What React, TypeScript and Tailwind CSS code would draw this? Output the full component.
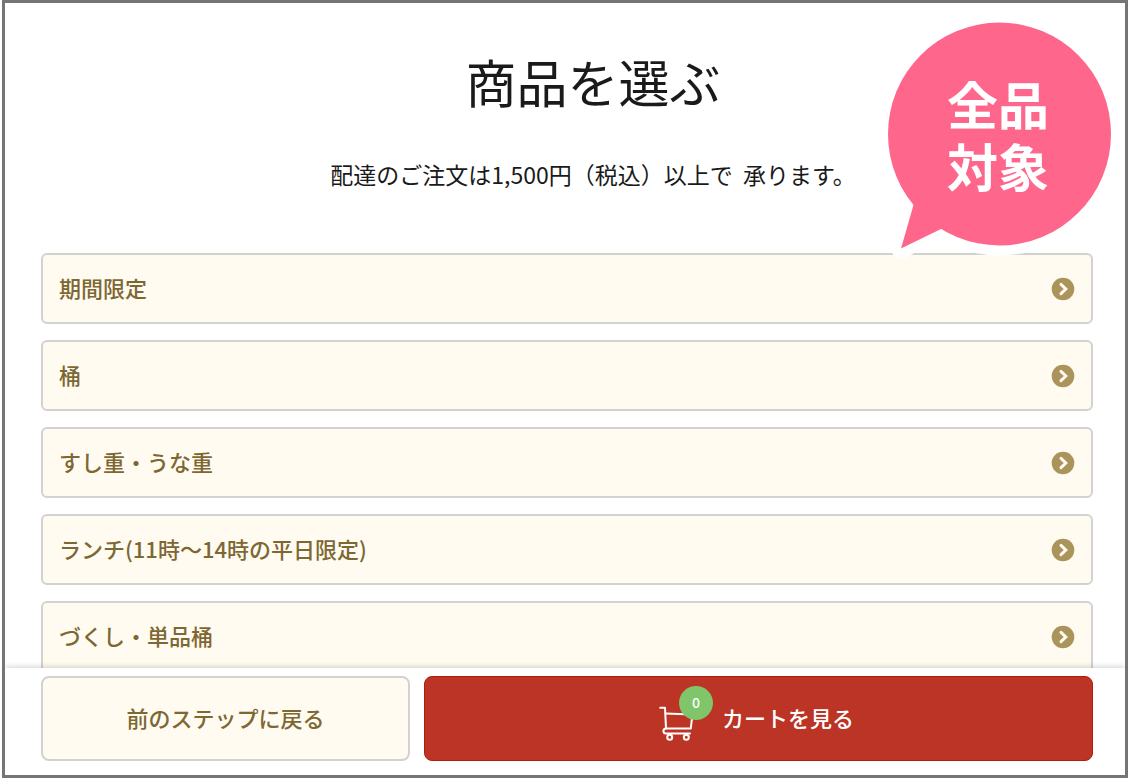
const categories = [
  "期間限定",
  "桶",
  "すし重・うな重",
  "ランチ(11時〜14時の平日限定)",
  "づくし・単品桶",
];

function ArrowIcon() {
  return (
    <svg className="mt-1 size-6 shrink-0" viewBox="0 0 24 24" fill="none" aria-hidden="true">
      <circle cx="12" cy="12" r="11.3" fill="#ab935c" />
      <path d="M10 7.4 14.8 12 10 16.6" stroke="#fffbf0" strokeWidth="3" strokeLinecap="round" />
    </svg>
  );
}

function CartIcon() {
  return (
    <svg
      className="h-9 w-[35px]"
      viewBox="0 0 35 36"
      fill="none"
      stroke="#fff"
      strokeWidth="2"
      strokeLinecap="round"
      strokeLinejoin="round"
      aria-hidden="true"
    >
      <path d="M1.2 2.8H6l1 20.6" />
      <path d="M6.4 8.4 33.4 9.6 31.8 23.4H7c-3.4 0-3.4 5 0 5h24" />
      <circle cx="10.7" cy="32.2" r="2.5" />
      <circle cx="27.3" cy="32.2" r="2.5" />
    </svg>
  );
}

function Bubble() {
  return (
    <div className="absolute top-[10px] right-[3px] h-[246px] w-[244px]">
      <svg className="absolute inset-0 size-full" viewBox="0 0 244 246" aria-hidden="true">
        <g fill="#fff" stroke="#fff" strokeWidth="20" strokeLinejoin="round">
          <circle cx="121.5" cy="121" r="111.5" />
          <path d="M35.5 192 23 235.5 63 216Z" />
        </g>
        <g fill="#ff668c">
          <circle cx="121.5" cy="121" r="111.5" />
          <path d="M35.5 192 23 235.5 63 216 80 170Z" />
        </g>
      </svg>
      <p className="relative pt-[59px] pr-1 text-center text-[51px] leading-[62px] font-bold text-white">
        <span className="block">全品</span>
        <span className="block">対象</span>
      </p>
    </div>
  );
}

export default function App() {
  return (
    <div className="h-screen px-[2px] pb-px font-['Noto_Sans_CJK_JP',sans-serif] text-[22px] leading-8">
      <div className="relative flex h-full flex-col overflow-hidden border-[3px] border-[#757575] bg-white">
        <main className="min-h-0 flex-1 overflow-y-auto pr-8 pl-9 [scrollbar-width:none]">
          <header className="pt-[42px] pl-[52px] text-center text-[#1a1a1a]">
            <h1 className="text-[51px] leading-[72px]">商品を選ぶ</h1>
            <p className="mt-[41px] text-[23px] whitespace-pre">配達のご注文は1,500円（税込）以上で  承ります。</p>
          </header>

          <ul className="mt-[63px] flex flex-col gap-4 pb-4">
            {categories.map((name) => (
              <li key={name}>
                <button
                  type="button"
                  className="flex h-[71px] w-full items-center justify-between rounded-md border-2 border-[#d2d2d0] bg-[#fffbf0] px-4 pb-1 text-left font-medium text-[#7d6733]"
                >
                  {name}
                  <ArrowIcon />
                </button>
              </li>
            ))}
          </ul>
        </main>

        <footer className="relative flex gap-[14px] bg-white pt-2 pr-8 pb-[14px] pl-9 shadow-[0_-1px_6px_rgba(0,0,0,0.18)]">
          <button
            type="button"
            className="h-[85px] flex-[365] rounded-lg border-2 border-[#d2d2d0] bg-[#fffbf0] pb-1 font-medium text-[#7d6733]"
          >
            前のステップに戻る
          </button>
          <button
            type="button"
            className="flex h-[85px] flex-[663] items-center justify-center gap-7 rounded-lg border border-[#b31c0c] bg-[#bb3425] pr-1 pb-1 font-medium text-white"
          >
            <span className="relative pt-3">
              <CartIcon />
              <span className="absolute -top-[7px] left-5 flex size-[34px] items-center justify-center rounded-full bg-[#80c56a] pb-px text-sm">
                0
              </span>
            </span>
            カートを見る
          </button>
        </footer>

        <Bubble />
      </div>
    </div>
  );
}
